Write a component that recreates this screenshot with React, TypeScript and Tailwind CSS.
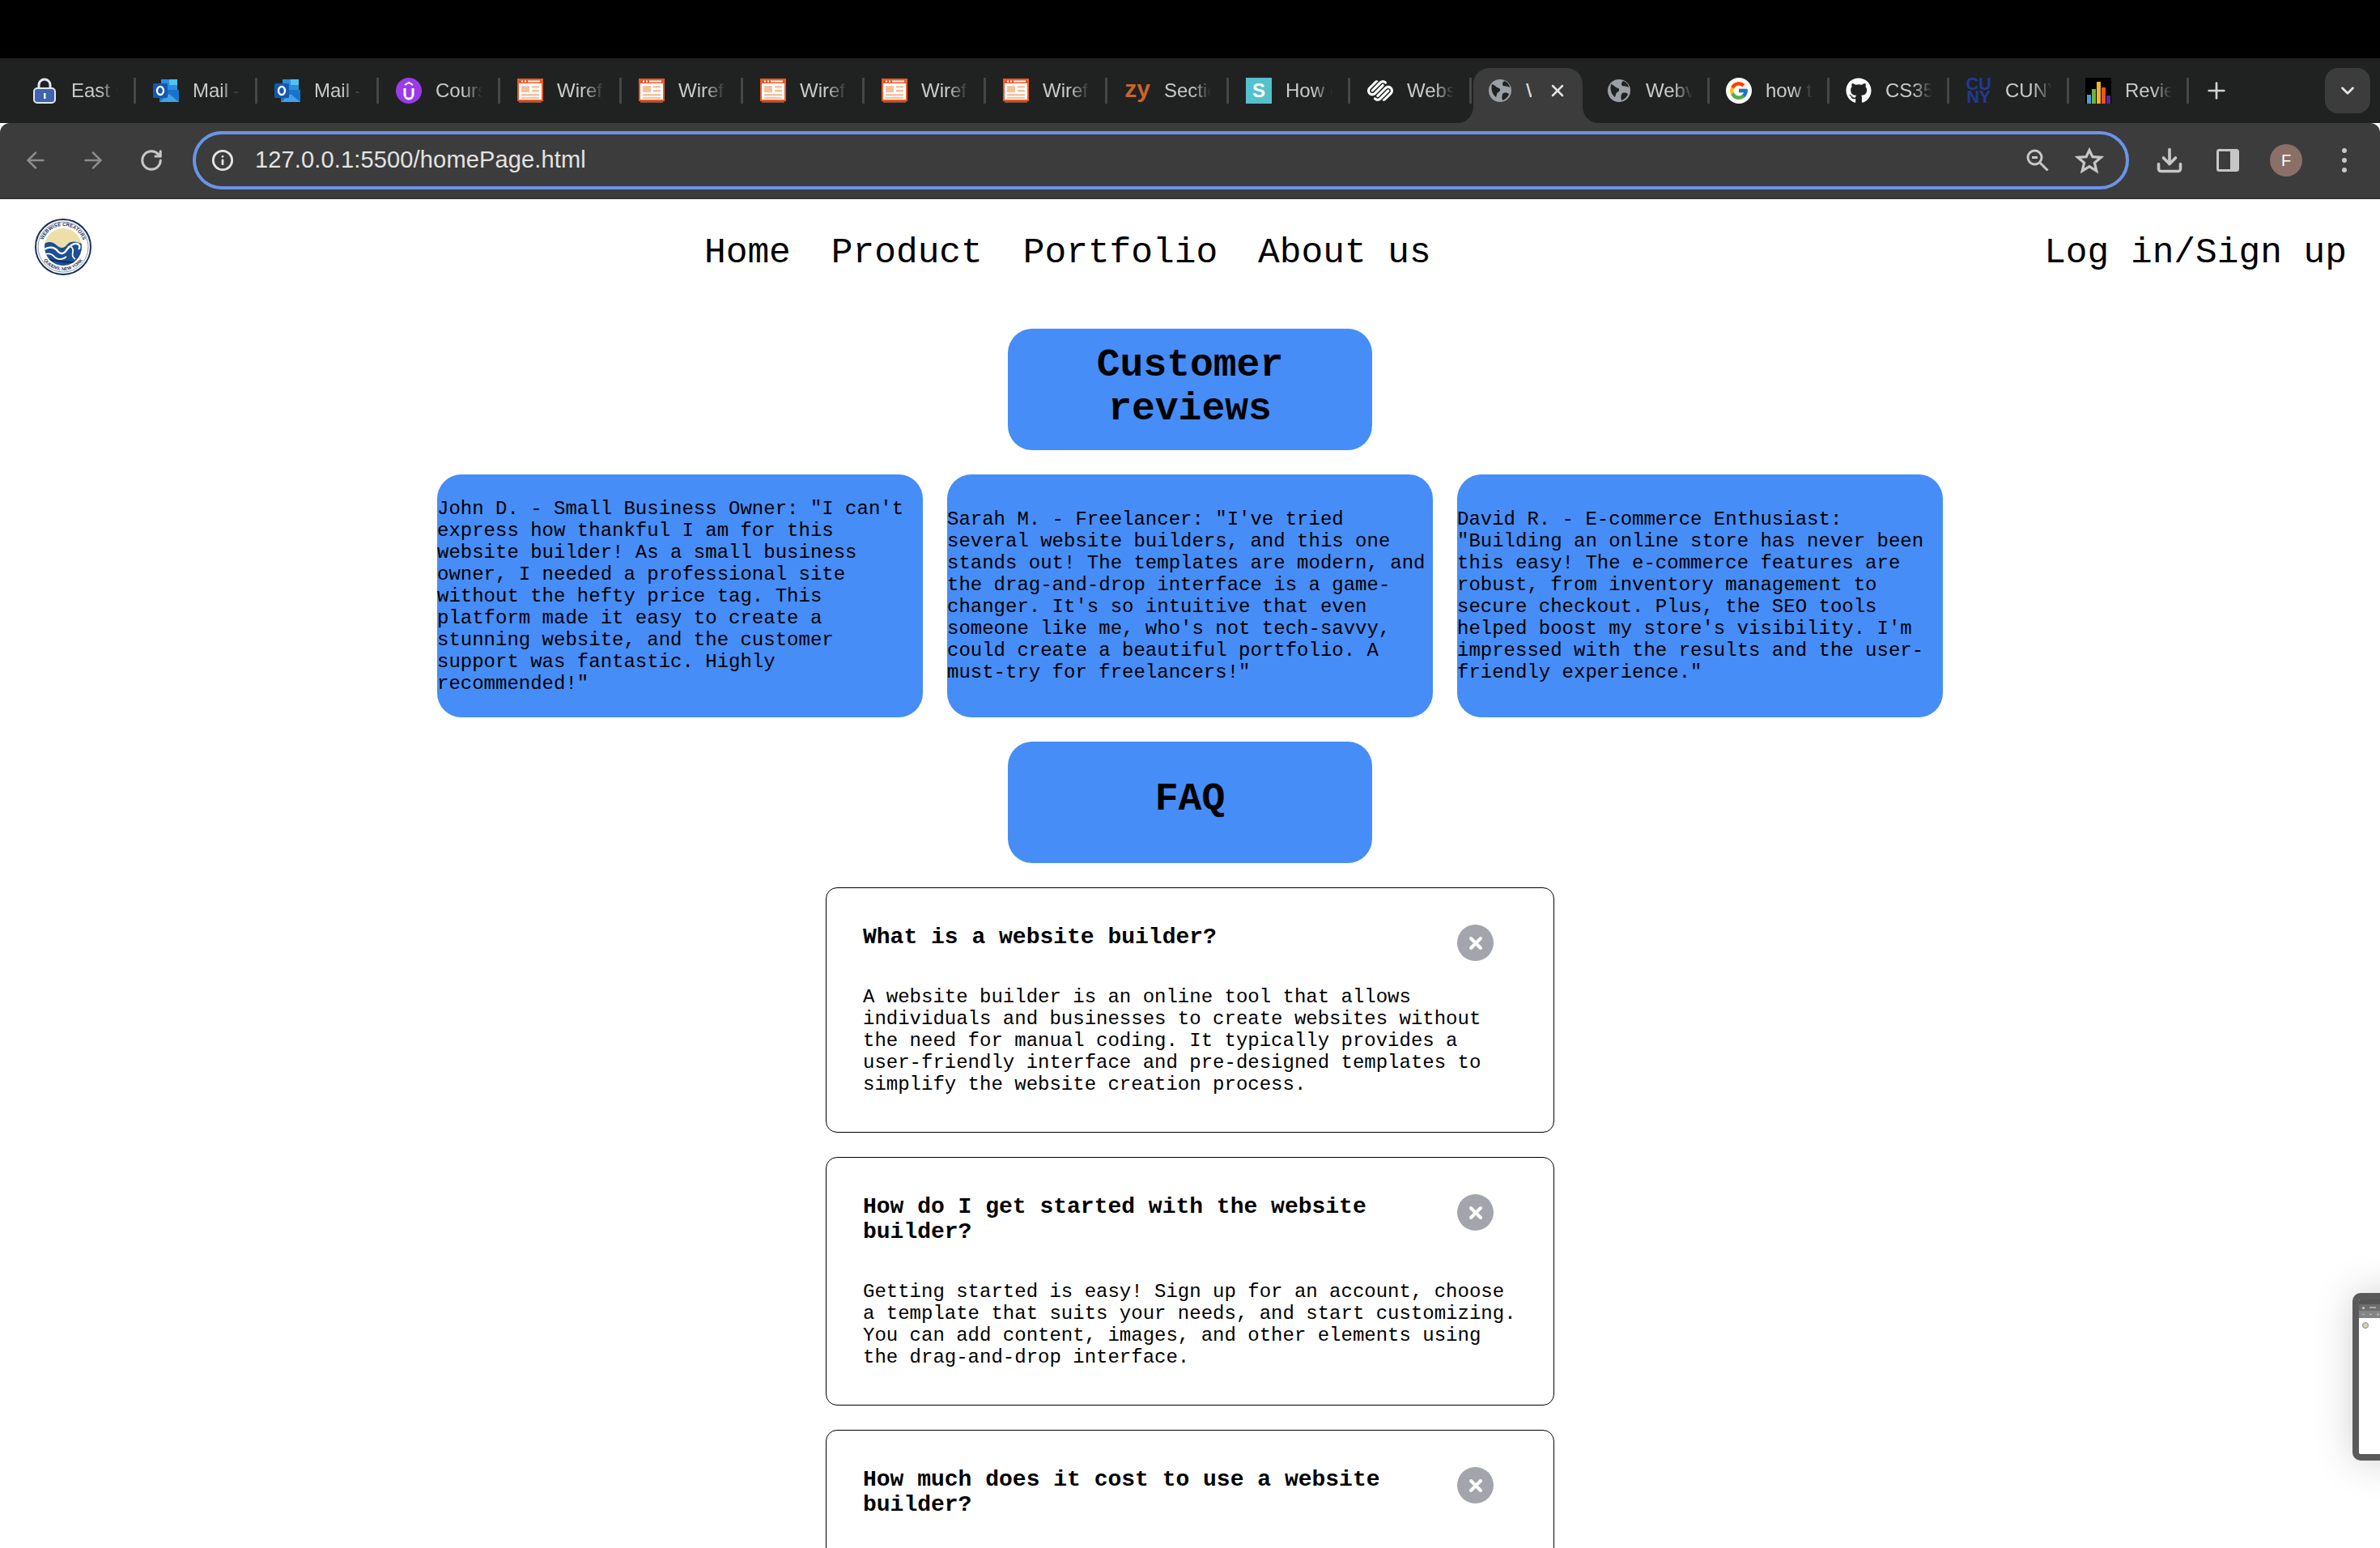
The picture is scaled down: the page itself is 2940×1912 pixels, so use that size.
import type { ReactNode } from "react";
import { ArrowLeft, ArrowRight, ChevronDown, Download, Info, Plus, RotateCw, X } from "lucide-react";
import { FaGithub } from "react-icons/fa";
import { FcGoogle } from "react-icons/fc";
import { SiSquarespace } from "react-icons/si";

function LockIcon() {
  return (
    <svg viewBox="0 0 30 32" className="w-[30px] h-[32px]">
      <path d="M8 14V9a7 7 0 0 1 14 0v5" fill="none" stroke="#dfe6f5" strokeWidth="3" />
      <rect x="2" y="13" width="26" height="18" rx="4" fill="#3f63ad" stroke="#dfe6f5" strokeWidth="2" />
      <rect x="14" y="19" width="2.5" height="7" fill="#fff" />
    </svg>
  );
}

function OutlookIcon() {
  return (
    <svg viewBox="0 0 32 28" className="w-[32px] h-[28px]">
      <rect x="10" y="0" width="20" height="14" fill="#2a8fe0" />
      <rect x="20" y="0" width="10" height="7" fill="#4fc3f0" />
      <path d="M8 13h24v15H8z" fill="#1a73c8" />
      <path d="M8 28l12-10 12 10z" fill="#3fa1e8" />
      <rect x="0" y="5" width="18" height="18" rx="1.5" fill="#1557b0" />
      <ellipse cx="9" cy="14" rx="4" ry="5" fill="none" stroke="#fff" strokeWidth="2.4" />
    </svg>
  );
}

function UdemyIcon() {
  return (
    <svg viewBox="0 0 32 32" className="w-[32px] h-[32px]">
      <circle cx="16" cy="16" r="16" fill="#9b3be8" />
      <path d="M11 13v8a5 5 0 0 0 10 0v-8" fill="none" stroke="#fff" strokeWidth="3" />
      <path d="M11 9l5-3 5 3" fill="none" stroke="#fff" strokeWidth="2" />
    </svg>
  );
}

function WireIcon() {
  return (
    <svg viewBox="0 0 32 30" className="w-[32px] h-[30px]">
      <rect x="2" y="26" width="28" height="4" fill="#7a5a4c" />
      <rect x="1" y="1" width="30" height="26" fill="#fff" stroke="#ea5a2b" strokeWidth="2" />
      <rect x="1" y="1" width="30" height="5" fill="#ea5a2b" />
      <rect x="5" y="2.5" width="2" height="2" fill="#fff" />
      <rect x="9" y="2.5" width="2" height="2" fill="#fff" />
      <rect x="13" y="2.5" width="15" height="2" fill="#fff" />
      <rect x="5" y="9" width="10" height="8" fill="#f5c09f" />
      <rect x="18" y="9" width="9" height="2.5" fill="#f5c09f" />
      <rect x="18" y="14" width="9" height="2.5" fill="#f5c09f" />
      <rect x="5" y="19" width="22" height="2.5" fill="#f5c09f" />
      <rect x="5" y="23" width="22" height="2" fill="#f5c09f" />
    </svg>
  );
}

function GlobeIcon() {
  return (
    <svg viewBox="0 0 30 30" className="w-[30px] h-[30px]">
      <circle cx="15" cy="15" r="14" fill="#9aa0a6" />
      <path d="M5 7c4 1 5 4 9 5 2 1 1 4-1 5-2 0-2 4-3 6-3-2-7-8-5-16zM20 3c-2 2-3 4-1 6 3 1 5 0 8 2 0-3-3-7-7-8zM19 18c3-1 6 0 7 1-1 4-5 7-8 8-1-3-1-7 1-9z" fill="#202222" />
    </svg>
  );
}

function CunyIcon() {
  return (
    <span className="flex flex-col items-center text-[#1f3a93] font-bold text-[22px] leading-[16px] tracking-[-0.5px]">
      <span>CU</span>
      <span>NY</span>
    </span>
  );
}

function BarsIcon() {
  return (
    <svg viewBox="0 0 32 32" className="w-[32px] h-[32px]">
      <rect width="32" height="32" fill="#000" />
      <rect x="2" y="21" width="5" height="11" fill="#3fa0e0" />
      <rect x="8" y="14" width="5" height="18" fill="#6cb33f" />
      <rect x="14" y="5" width="5" height="27" fill="#f0b429" />
      <rect x="20" y="12" width="5" height="20" fill="#e8552b" />
      <rect x="26" y="22" width="5" height="10" fill="#5b2a9d" />
    </svg>
  );
}

function SiteLogo() {
  return (
    <svg viewBox="0 0 70 70" className="w-[70px] h-[70px]">
      <defs>
        <path id="logoTop" d="M9 35a26 26 0 0 1 52 0" />
        <path id="logoBottom" d="M6 35a29 29 0 0 0 58 0" />
        <clipPath id="logoClip">
          <circle cx="35" cy="35" r="23" />
        </clipPath>
      </defs>
      <circle cx="35" cy="35" r="34" fill="#fff" stroke="#1b3157" strokeWidth="2" />
      <circle cx="35" cy="35" r="31" fill="none" stroke="#1b3157" strokeWidth="0.5" />
      <g clipPath="url(#logoClip)">
        <rect x="10" y="10" width="50" height="50" fill="#eedfa8" />
        <path d="M10 32c6-4 12-4 17 1 5 4 9 4 13-1 5-5 12-4 20 0v30H10z" fill="#1c4f94" />
        <path d="M12 38c6-4 13-3 17 3 3 3 7 3 10-2 3-4 7-9 13-8 4 1 4 5 2 7" fill="none" stroke="#fff" strokeWidth="2.4" />
        <path d="M10 45c6-3 11-2 15 3 4 3 10 3 14-1" fill="none" stroke="#fff" strokeWidth="1.8" />
        <path d="M41 35c4-2 7 2 6 6-1 4-1 7 3 9" fill="none" stroke="#fff" strokeWidth="1.8" />
        <path d="M10 52c10-4 18 3 40 2" fill="none" stroke="#0f2c5a" strokeWidth="2" />
      </g>
      <text fontSize="6" fontFamily="'Liberation Sans', sans-serif" fontWeight="700" fill="#1b3157">
        <textPath href="#logoTop" startOffset="50%" textAnchor="middle">WEBWISE CREATORS</textPath>
      </text>
      <text fontSize="5.5" fontFamily="'Liberation Sans', sans-serif" fontWeight="700" fill="#1b3157">
        <textPath href="#logoBottom" startOffset="50%" textAnchor="middle">QUEENS, NEW YORK</textPath>
      </text>
    </svg>
  );
}

type TabInfo = { icon: ReactNode; title: string };

const leftTabs: TabInfo[] = [
  { icon: <LockIcon />, title: "East Coast" },
  { icon: <OutlookIcon />, title: "Mail - F" },
  { icon: <OutlookIcon />, title: "Mail - F" },
  { icon: <UdemyIcon />, title: "Course" },
  { icon: <WireIcon />, title: "Wireframe" },
  { icon: <WireIcon />, title: "Wireframe" },
  { icon: <WireIcon />, title: "Wireframe" },
  { icon: <WireIcon />, title: "Wireframe" },
  { icon: <WireIcon />, title: "Wireframe" },
  { icon: <span className="font-bold text-[#c8642c] text-[30px] leading-[28px] -mt-1">zy</span>, title: "Section" },
  {
    icon: (
      <span className="flex items-center justify-center w-[32px] h-[32px] bg-[#55c1cc] text-white font-bold text-[24px]">S</span>
    ),
    title: "How do",
  },
  { icon: <SiSquarespace className="w-[32px] h-[32px] text-white" />, title: "Website" },
];

const rightTabs: TabInfo[] = [
  { icon: <GlobeIcon />, title: "Webview" },
  {
    icon: (
      <span className="flex items-center justify-center w-[32px] h-[32px] bg-white rounded-full">
        <FcGoogle className="w-[26px] h-[26px]" />
      </span>
    ),
    title: "how to",
  },
  { icon: <FaGithub className="w-[32px] h-[32px] text-white" />, title: "CS355" },
  { icon: <CunyIcon />, title: "CUNY" },
  { icon: <BarsIcon />, title: "Review" },
];

function Tab({ icon, title, wide }: TabInfo & { wide?: boolean }) {
  return (
    <div className={`flex items-center shrink-0 h-[36px] ${wide ? "w-[148px] pl-[20px]" : "w-[150px] pl-[21px]"}`}>
      <div className="flex items-center justify-center w-[32px] h-[32px] shrink-0">{icon}</div>
      <div className="w-[58px] ml-[17px] overflow-hidden whitespace-nowrap text-[24px] text-[#c9caca] [mask-image:linear-gradient(to_right,black_60%,transparent)]">
        {title}
      </div>
      <div className="ml-auto w-[3px] h-[32px] bg-[#454747] shrink-0" />
    </div>
  );
}

function BrowserChrome() {
  return (
    <div className="font-['Liberation_Sans',sans-serif]">
      <div className="h-[72px] bg-black" />
      {/* tab strip */}
      <div className="flex h-[80px] bg-[#202222]">
        <div className="flex items-center">
          <div className="w-[18px]" />
          {leftTabs.map((t, i) => (
            <Tab key={i} {...t} />
          ))}
        </div>
        <div className="relative self-end shrink-0 flex items-center w-[135px] h-[68px] ml-[2px] pl-[18px] pb-[12px] bg-[#3c3c3c] rounded-t-[20px]">
          <div className="absolute -left-[20px] bottom-0 w-[20px] h-[20px] bg-[#3c3c3c]">
            <div className="w-full h-full bg-[#202222] rounded-br-[20px]" />
          </div>
          <div className="absolute -right-[20px] bottom-0 w-[20px] h-[20px] bg-[#3c3c3c]">
            <div className="w-full h-full bg-[#202222] rounded-bl-[20px]" />
          </div>
          <GlobeIcon />
          <div className="w-[7px] ml-[17px] overflow-hidden text-[24px] text-[#dcdcdc]">W</div>
          <X className="w-[24px] h-[24px] ml-[20px] text-[#e3e3e3]" strokeWidth={2.5} />
        </div>
        <div className="flex items-center pl-[9px]">
          {rightTabs.map((t, i) => (
            <Tab key={i} {...t} wide />
          ))}
          <Plus className="w-[32px] h-[32px] ml-[18px] text-[#d4d4d4]" strokeWidth={2} />
        </div>
        <div className="ml-auto mr-[12px] mt-[12px] flex items-center justify-center w-[56px] h-[56px] rounded-[16px] bg-[#3c3c3c]">
          <ChevronDown className="w-[26px] h-[26px] text-[#e3e3e3]" strokeWidth={2.5} />
        </div>
      </div>
      {/* toolbar */}
      <div className="flex items-center h-[94px] bg-[#3c3c3c] border-b-2 border-[#343434] rounded-t-[12px]">
        <ArrowLeft className="w-[32px] h-[32px] ml-[28px] text-[#8b8c8c]" strokeWidth={2} />
        <ArrowRight className="w-[32px] h-[32px] ml-[39px] text-[#8b8c8c]" strokeWidth={2} />
        <RotateCw className="w-[30px] h-[30px] ml-[41px] text-[#c7c7c7]" strokeWidth={2.4} />
        <div className="flex items-center w-[2392px] h-[72px] ml-[36px] pl-[19px] pr-[28px] border-4 border-[#6b94e8] rounded-full">
          <Info className="w-[28px] h-[28px] text-[#e3e3e3]" strokeWidth={2.4} />
          <span className="ml-[26px] text-[29px] tracking-[0.15px] text-[#e3e3e3]">127.0.0.1:5500/homePage.html</span>
          <svg viewBox="0 0 28 28" className="ml-auto w-[28px] h-[28px]" fill="none" stroke="#c7c7c7" strokeWidth="3">
            <circle cx="10.5" cy="10.5" r="8.5" />
            <path d="M7 10.5h7M17 17l9.5 9.5" />
          </svg>
          <svg viewBox="0 0 34 32" className="ml-[33px] w-[34px] h-[32px] overflow-visible" fill="none" stroke="#c7c7c7" strokeWidth="3.2">
            <path d="M17 3.5l3.9 8.2 10.4 .7-7.9 6.6 2.4 10.1-8.8-5.5-8.8 5.5 2.4-10.1-7.9-6.6 10.4-.7z" />
          </svg>
        </div>
        <Download className="w-[36px] h-[36px] ml-[32px] text-[#c7c7c7]" strokeWidth={2.4} />
        <svg viewBox="0 0 28 28" className="w-[28px] h-[28px] ml-[40px]">
          <rect x="1.5" y="1.5" width="25" height="25" rx="2" fill="none" stroke="#c7c7c7" strokeWidth="3" />
          <rect x="17" y="2" width="9" height="24" fill="#c7c7c7" />
        </svg>
        <div className="flex items-center justify-center w-[40px] h-[40px] ml-[38px] rounded-full bg-[#8a7067] text-white text-[20px]">F</div>
        <div className="flex flex-col gap-[6px] ml-[49px]">
          <span className="w-[6px] h-[6px] rounded-full bg-[#c7c7c7]" />
          <span className="w-[6px] h-[6px] rounded-full bg-[#c7c7c7]" />
          <span className="w-[6px] h-[6px] rounded-full bg-[#c7c7c7]" />
        </div>
      </div>
    </div>
  );
}

const reviews = [
  `John D. - Small Business Owner: "I can't express how thankful I am for this website builder! As a small business owner, I needed a professional site without the hefty price tag. This platform made it easy to create a stunning website, and the customer support was fantastic. Highly recommended!"`,
  `Sarah M. - Freelancer: "I've tried several website builders, and this one stands out! The templates are modern, and the drag-and-drop interface is a game-changer. It's so intuitive that even someone like me, who's not tech-savvy, could create a beautiful portfolio. A must-try for freelancers!"`,
  `David R. - E-commerce Enthusiast: "Building an online store has never been this easy! The e-commerce features are robust, from inventory management to secure checkout. Plus, the SEO tools helped boost my store's visibility. I'm impressed with the results and the user-friendly experience."`,
];

const faqs = [
  {
    q: "What is a website builder?",
    a: "A website builder is an online tool that allows individuals and businesses to create websites without the need for manual coding. It typically provides a user-friendly interface and pre-designed templates to simplify the website creation process.",
  },
  {
    q: "How do I get started with the website builder?",
    a: "Getting started is easy! Sign up for an account, choose a template that suits your needs, and start customizing. You can add content, images, and other elements using the drag-and-drop interface.",
  },
  {
    q: "How much does it cost to use a website builder?",
    a: "Pricing varies by plan. Many builders offer a free tier along with paid plans that add more features.",
  },
];

function SectionTitle({ children, lift }: { children: ReactNode; lift: string }) {
  return (
    <h2 className={`flex items-center justify-center w-[450px] h-[150px] rounded-[30px] bg-[#468df8] text-center text-[48px] leading-[54px] font-bold text-black ${lift}`}>
      {children}
    </h2>
  );
}

function ScreenPreview() {
  return (
    <div className="absolute left-[2906px] top-[1597px] w-[300px] h-[207px] border-[8px] border-[#5a5a5a] rounded-[10px] bg-white shadow-[0_0_50px_rgba(0,0,0,0.18)] overflow-hidden">
      <div className="h-[6px] bg-[#555555]" />
      <div className="flex items-center gap-[6px] h-[8px] pl-[4px] bg-[#6e6e6e]">
        <span className="w-[3px] h-[3px] rounded-full bg-[#c5cce0]" />
        <span className="w-[8px] h-[2px] bg-[#a8a8a8]" />
        <span className="w-[3px] h-[3px] rounded-full bg-[#7fa4dc]" />
      </div>
      <div className="flex items-center gap-[6px] h-[9px] pl-[4px] bg-[#858585]">
        <span className="w-[3px] h-[1px] bg-[#bbbbbb]" />
        <span className="w-[3px] h-[1px] bg-[#bbbbbb]" />
        <span className="w-[3px] h-[3px] rounded-full border border-[#cccccc]" />
        <span className="w-[200px] h-[7px] rounded-full border border-[#a4b8e0]" />
      </div>
      <div className="w-[8px] h-[8px] mt-[5px] ml-[4px] rounded-full bg-[#d8cfa8] border border-[#8090a8]" />
    </div>
  );
}

export default function App() {
  return (
    <div className="relative w-[2940px] h-[1912px] overflow-hidden bg-white text-black font-['Liberation_Mono',monospace]">
      <BrowserChrome />

      <header className="flex items-start h-[160px]">
        <div className="ml-[43px] mt-[24px] shrink-0">
          <SiteLogo />
        </div>
        <nav className="flex gap-[50px] ml-[757px] mt-[41px] text-[44.5px] leading-[50px]">
          <span>Home</span>
          <span>Product</span>
          <span>Portfolio</span>
          <span>About us</span>
        </nav>
        <span className="ml-auto mr-[41px] mt-[41px] text-[44.5px] leading-[50px]">Log in/Sign up</span>
      </header>

      <main className="flex flex-col items-center gap-[30px]">
        <SectionTitle lift="pb-[6px]">Customer reviews</SectionTitle>
        <div className="flex gap-[30px]">
          {reviews.map((r, i) => (
            <div key={i} className="flex items-center w-[600px] h-[300px] rounded-[30px] bg-[#468df8] text-[24px] leading-[27px]">
              <p>{r}</p>
            </div>
          ))}
        </div>
        <SectionTitle lift="pb-[8px]">FAQ</SectionTitle>
        <div className="flex flex-col gap-[30px] w-[900px]">
          {faqs.map((f, i) => (
            <div key={i} className="border border-black rounded-[14px] px-[45px] py-[45px]">
              <div className="flex items-start justify-between">
                <h3 className="w-[700px] text-[28px] leading-[31px] font-bold">{f.q}</h3>
                <button className="flex items-center justify-center w-[45px] h-[45px] -mb-[14px] mr-[29px] rounded-full bg-[#a2a5ab] text-white">
                  <X className="w-[24px] h-[24px]" strokeWidth={4} />
                </button>
              </div>
              <p className="mt-[45px] text-[24px] leading-[27px]">{f.a}</p>
            </div>
          ))}
        </div>
      </main>

      <ScreenPreview />
    </div>
  );
}
